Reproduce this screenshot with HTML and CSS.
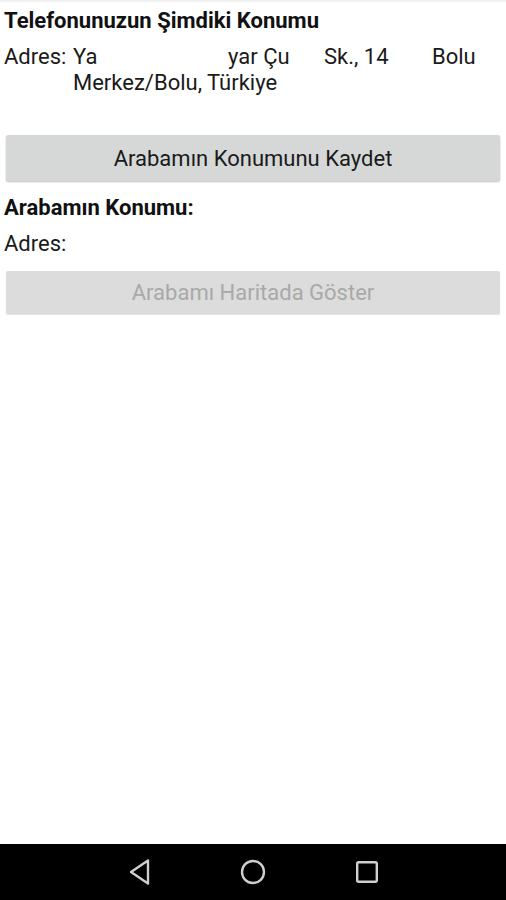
FILE: index.html
```html
<!DOCTYPE html>
<html lang="tr">
<head>
<meta charset="utf-8">
<link rel="stylesheet" href="styles.css">
</head>
<body>
<div class="screen">
  <main class="content">
    <h2 class="title">Telefonunuzun Şimdiki Konumu</h2>
    <div class="addr">
      <span class="label">Adres:</span>
      <span class="value"><span class="w1">Ya</span><span class="w2">yar Çu</span><span class="w3">Sk., 14</span><span class="w4">Bolu</span><br>Merkez/Bolu, Türkiye</span>
    </div>
    <button class="btn btn-save">Arabamın Konumunu Kaydet</button>
    <h2 class="title title2">Arabamın Konumu:</h2>
    <div class="addr addr2"><span class="label">Adres:</span></div>
    <button class="btn btn-disabled" disabled>Arabamı Haritada Göster</button>
  </main>
  <nav class="navbar">
    <svg class="nav-icon" width="24" height="28" viewBox="0 0 24 28"><path d="M21 2.5 L4 14 L21 25.5 Z" fill="none" stroke="#cfcfcf" stroke-width="2.4" stroke-linejoin="round"/></svg>
    <svg class="nav-icon" width="28" height="28" viewBox="0 0 28 28"><circle cx="14" cy="14" r="11" fill="none" stroke="#cfcfcf" stroke-width="2.4"/></svg>
    <svg class="nav-icon" width="24" height="24" viewBox="0 0 24 24"><rect x="2.2" y="2.2" width="19.6" height="19.6" rx="1.5" fill="none" stroke="#cfcfcf" stroke-width="2.4"/></svg>
  </nav>
</div>
</body>
</html>
```
FILE: styles.css
```css
html, body {
  margin: 0;
  padding: 0;
  background: #fff;
}
.screen {
  width: 506px;
  height: 900px;
  display: flex;
  flex-direction: column;
  font-family: Roboto, "Noto Sans", sans-serif;
  color: #111;
  background: #fff;
  border-top: 2px solid #f1f1f1;
  box-sizing: border-box;
}
.content {
  flex: 1;
  padding: 6px 6px 0 4px;
  display: flex;
  flex-direction: column;
}
.title {
  margin: 0;
  font-size: 22px;
  font-weight: bold;
  line-height: 26px;
  color: #111;
}
.addr {
  display: flex;
  font-size: 22px;
  line-height: 26px;
  margin-top: 10px;
  color: #1a1a1a;
}
.label {
  width: 69px;
  flex: none;
}
.value .w1 { display: inline-block; width: 155px; }
.value .w2 { display: inline-block; width: 96px; }
.value .w3 { display: inline-block; width: 108px; }
.btn {
  display: block;
  margin: 39px 0 0 2px;
  height: 46px;
  border: none;
  border-radius: 2px;
  background: #d6d7d7;
  box-shadow: 0 1px 2px rgba(0,0,0,0.25);
  font-family: Roboto, "Noto Sans", sans-serif;
  font-size: 22px;
  color: #1a1a1a;
  padding: 0;
}
.title2 { margin-top: 14px; }
.addr2 { margin-top: 10px; }
.btn-disabled {
  margin-top: 14px;
  height: 43px;
  background: #dcdcdc;
  color: #a9a9a9;
  box-shadow: 0 1px 1px rgba(0,0,0,0.12);
}
.navbar {
  height: 56px;
  background: #000;
  display: flex;
  align-items: center;
  justify-content: center;
  gap: 88px;
}
```
